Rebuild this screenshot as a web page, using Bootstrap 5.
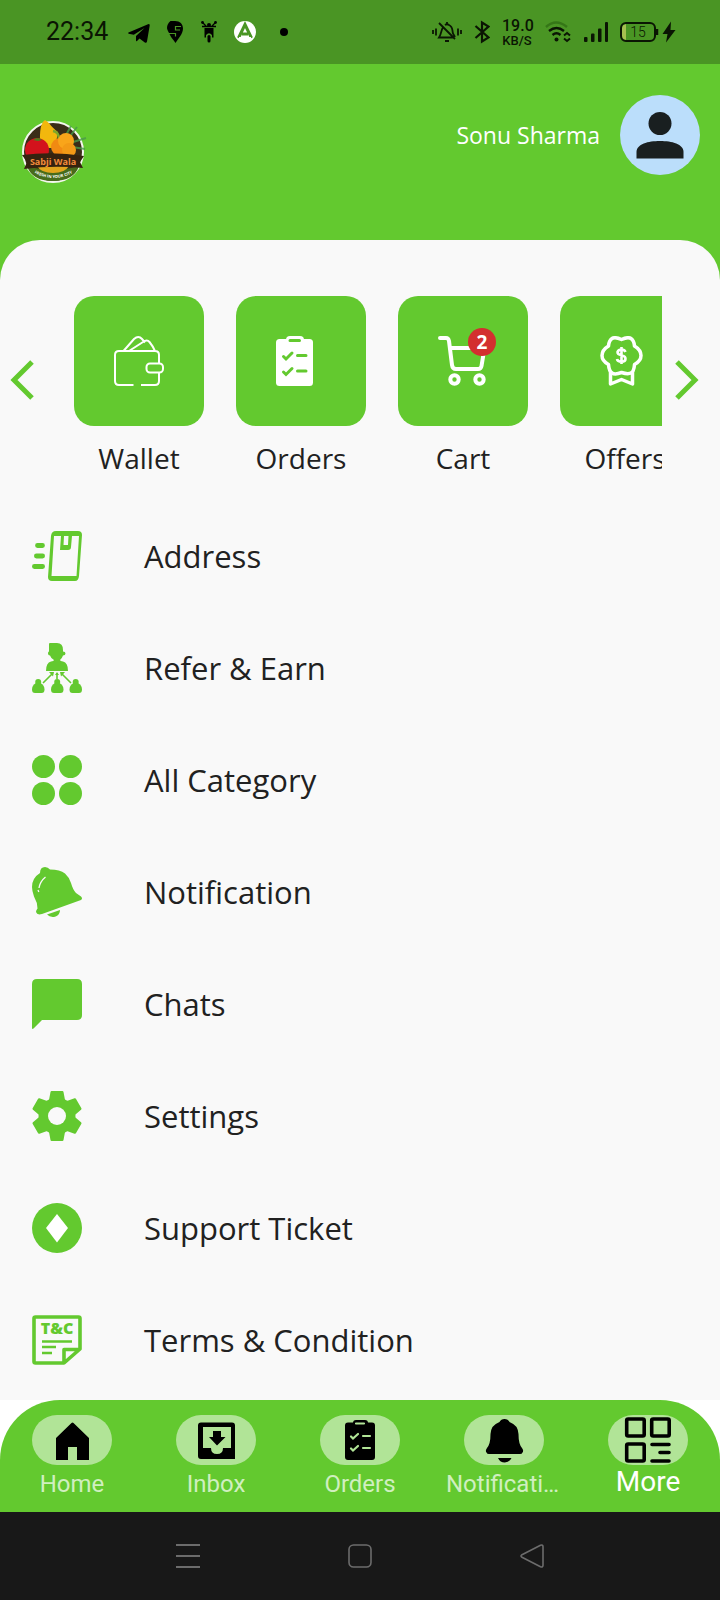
<!DOCTYPE html>
<html lang="en">
<head>
<meta charset="utf-8">
<meta name="viewport" content="width=device-width, initial-scale=1">
<title>Sabji Wala – More</title>
<link href="https://cdn.jsdelivr.net/npm/bootstrap@5.3.0/dist/css/bootstrap.min.css" rel="stylesheet">
<style>
  :root { --leaf: #63c92f; --leaf-dark: #4a9524; --paper: #f9f9f9; --ink: #212121; }
  body { font-family: "Open Sans", "Noto Sans", sans-serif; background: var(--paper); color: var(--ink); }
  svg { display: block; flex-shrink: 0; }
  a { color: inherit; text-decoration: none; }

  .status-bar { height: 64px; padding: 0 44px 0 46px; background: var(--leaf-dark); color: #0a1503; font-family: Roboto, sans-serif; }
  .status-set { gap: 16px; }
  .status-set.tight { gap: 12px; }
  .clock { min-width: 64px; font-size: 25px; line-height: 32px; }
  .net-speed { width: 30px; font-size: 13px; line-height: 13px; font-weight: 500; text-align: center; }
  .net-speed strong { display: block; font-size: 16px; line-height: 16px; font-weight: 500; }

  .app-header { min-height: 176px; padding: 31px 20px 0; background: var(--leaf); color: #fff; }
  .user-name { font-size: 23px; line-height: 32px; }
  .avatar { width: 80px; height: 80px; background: #bbdefb; }

  .sheet-wrap { background: var(--leaf); }
  .sheet { background: var(--paper); border-radius: 40px 40px 0 0; padding-top: 40px; padding-bottom: 4px; }
  .arrow-btn { width: 58px; padding: 0 0 0 10px; color: var(--leaf); border: 0; background: none; }
  .arrow-btn svg { overflow: visible; }
  .tile-strip { gap: 32px; padding: 16px 16px 4px; overflow: hidden; }
  .tile { width: 130px; }
  .tile-face { width: 130px; height: 130px; border-radius: 20px; background: var(--leaf); color: #fff; }
  .tile-label { font-size: 28px; line-height: 36px; margin-top: 14px; }
  .count { top: -8px; right: -8px; width: 28px; height: 28px; background: #d32f2f; font-size: 19px; line-height: 28px; font-weight: 700; }

  .menu-list { padding-top: 20px; }
  .menu-row { height: 112px; padding: 0 32px; gap: 62px; font-size: 31px; line-height: 40px; }
  .menu-row svg { color: var(--leaf); }

  .tab-wrap { background: #fff; }
  .tab-bar { background: var(--leaf); border-radius: 60px 60px 0 0; padding: 15px 0 9px; font-family: Roboto, sans-serif; }
  .tab-item { flex: 1 1 0; min-width: 0; color: #d0efc0; font-size: 24px; line-height: 38px; }
  .tab-item.active { color: #fff; font-size: 28px; line-height: 34px; }
  .tab-pill { background: #b1e497; border-radius: 25px; color: #000; }
  .tab-text { max-width: 116px; }
  .sys-bar { height: 88px; background: #181818; color: #6c6c6c; gap: 148px; }
  .sys-bar button { color: inherit; background: none; border: 0; padding: 0; }
</style>
</head>
<body>
<div class="min-vh-100 d-flex flex-column">

  <div class="status-bar d-flex align-items-center justify-content-between">
    <div class="status-set d-flex align-items-center">
      <span class="clock">22:34</span>
      <svg width="24" height="24" viewBox="0 0 24 24" fill="#000"><path d="M2.500 12.600 22 4.300q2-.8 1.700 1.300L21 21.500q-.5 2-2.200.9L13.500 18.500 11 21q-1 .8-1-.7v-4.400L18.500 8 7.800 14.700 2.700 13.700q-1.200-.5-.2-1.100z"/></svg>
      <svg width="18" height="24" viewBox="0 0 18 24"><path fill="#000" d="M9 1c5 0 8 3 8 7.500C17 14 12 19 9.500 23 8 20.500 5 17.500 4 15L1.500 10Q1 8.500 1 8 1 4 4.500 1 9 1z"/><path d="M15 6.500H9.500V10H14M3 13.500h6.500v3" fill="none" stroke="#4a9524" stroke-width="1.200"/></svg>
      <svg width="18" height="24" viewBox="0 0 18 24" fill="#000"><circle cx="2.500" cy="2.500" r="1.400"/><circle cx="15.500" cy="2.500" r="1.400"/><path d="M3 3 6 6M15 3l-3 3M2 6.500h14" stroke="#000" stroke-width="1.300"/><circle cx="9" cy="5" r="2"/><path d="M4.500 8h9v9.500H12V15q-3-3.500-6 0v2.500H4.500z"/><rect x="7.500" y="15" width="3" height="7.500" rx="1.500"/></svg>
      <svg width="22" height="24" viewBox="0 0 22 24"><circle cx="11" cy="12" r="11" fill="#fff"/><path d="M4.500 18 11 4.500 17.500 18M8 14h6" fill="none" stroke="#4a9524" stroke-width="3"/><path d="M5 18.500h12" stroke="#fff" stroke-width="3"/></svg>
      <svg width="24" height="24" viewBox="0 0 24 24"><circle cx="12" cy="12" r="4" fill="#000"/></svg>
    </div>
    <div class="status-set tight d-flex align-items-center">
      <svg width="30" height="24" viewBox="0 0 30 24" fill="none" stroke="currentColor" stroke-width="1.800"><path d="M1 10v4M4 8.500v7M26 8.500v7M29 10v4M7 3l16 16M11 7.500C9 10 9.500 14 7 17.500h14M13 5q2-1.500 4 0c4 1.500 3 5 4 8.500l2 3.500M13 21h4M15 2v2"/></svg>
      <svg width="16" height="24" viewBox="0 0 16 24" fill="none" stroke="currentColor" stroke-width="2.200"><path d="m1.500 6 13 11.500L8 21.500v-19l6.500 4L1.500 18"/></svg>
      <div class="net-speed"><strong>19.0</strong>KB/S</div>
      <svg width="28" height="24" viewBox="0 0 28 24" fill="none" stroke="currentColor" stroke-width="2.400"><path d="M2 7q10-9 21 0" stroke="#357617"/><path d="M5 11q7.500-6 15 0M8.500 15q4-3.500 8 0"/><circle cx="12.500" cy="19.500" r="2" fill="currentColor" stroke="none"/><path d="m20 15.500 3-2.500 3 2.500M20 18.500l3 2.500 3-2.500" stroke-width="2"/></svg>
      <svg width="24" height="24" viewBox="0 0 24 24" fill="currentColor"><rect y="17" width="3.500" height="5" rx="1"/><rect x="7" y="13.500" width="3.500" height="8.500" rx="1"/><rect x="14" y="8.500" width="3.500" height="13.500" rx="1"/><rect x="21" y="2" width="3" height="20" rx="1"/></svg>
      <svg width="56" height="24" viewBox="0 0 56 24"><path d="M6 4v16q-4-1-4-4V8q0-3 4-4z" fill="#a5c050"/><rect x="1" y="3" width="34" height="18" rx="5" fill="none" stroke="#0a1503" stroke-width="2"/><path d="M37 9v6" stroke="#0a1503" stroke-width="2.500"/><text x="18" y="17" font-size="14" font-weight="300" text-anchor="middle" fill="#0a1503">15</text><path d="M51 1.500 42.500 14h5L46 22.500 55.500 10h-5z" fill="#0a1503"/></svg>
    </div>
  </div>

  <header class="app-header d-flex align-items-start justify-content-between">
    <a href="#" class="mt-4" aria-label="Sabji Wala">
      <svg width="70" height="66" viewBox="0 0 70 66">
        <circle cx="33" cy="33" r="30" fill="#3a2d18" stroke="#f4f6ee" stroke-width="2"/>
        <g stroke="#4a9a4a" stroke-width="2" opacity=".8"><path d="M48 20 57 8M50 24l16-5M52 28l13 2M46 16l5-9"/></g>
        <path d="M20 29c0-12-1-24 5-28 5 3 7 8 13 12l-3 16z" fill="#f2b70d"/>
        <path d="M33 12q6 1 6 8" stroke="#7ca72b" stroke-width="2.500" fill="none"/>
        <circle cx="17" cy="31" r="12" fill="#d3121c"/><path d="M13 21q5-4 9 0l-4 1z" fill="#4e7c1e"/>
        <circle cx="40" cy="28" r="9" fill="#f18a12"/><circle cx="46" cy="22" r="8" fill="#f9a51a"/><circle cx="49" cy="31" r="7" fill="#f39a16"/>
        <path d="M7 47q26 8 52 0-5 15-26 15T7 47z" fill="#486b1b"/><path d="M17 47h32q-4 7-16 7t-16-7z" fill="#e3a51c"/>
        <path d="M2 36q31-4 62 1l-4 6 3 6q-30-3-59 1l3-7z" fill="#35230f"/>
        <text x="33" y="46" text-anchor="middle" font-family="Open Sans, sans-serif" font-size="9" font-weight="700" fill="#f28b3c">Sabji Wala</text>
        <path id="motto" d="M10 51q23 16 48 0" fill="none"/>
        <text font-size="4" font-family="Open Sans, sans-serif" font-weight="700" fill="#fff"><textPath href="#motto" startOffset="5">FRESH IN YOUR CITY</textPath></text>
      </svg>
    </a>
    <div class="d-flex align-items-center gap-3">
      <span class="user-name pe-1">Sonu Sharma</span>
      <a href="#" class="avatar rounded-circle d-flex align-items-center justify-content-center" aria-label="Profile">
        <svg width="48" height="48" viewBox="0 0 48 48" fill="#191f20"><circle cx="24" cy="12.500" r="11.500"/><path d="M.500 47.500V41C.500 33 12 30 24 30s23.500 3 23.500 11v6.500z"/></svg>
      </a>
    </div>
  </header>

  <div class="sheet-wrap flex-grow-1 d-flex flex-column">
    <main class="sheet flex-grow-1">
      <section class="d-flex align-items-center" aria-label="Shortcuts">
        <button type="button" class="arrow-btn flex-shrink-0" aria-label="Previous"><svg width="24" height="40" viewBox="0 0 24 40" fill="none" stroke="currentColor" stroke-width="5"><path d="M22 2 4 20l18 18"/></svg></button>
        <div class="tile-strip d-flex flex-grow-1">
          <a href="#" class="tile flex-shrink-0 text-center">
            <div class="tile-face d-flex align-items-center justify-content-center">
              <svg width="50" height="50" viewBox="0 0 50 50" fill="none" stroke="currentColor" stroke-width="2"><path d="M19.500 49H5q-4 0-4-4V19q0-4 4-4h36q4 0 4 4v8M45 37v8q0 4-4 4H27M9.500 15 20 3q4.500-4 8 0l3 3.500M15 15 29 6q4-3 6.500 0 4 5 5.500 9"/><rect x="32.500" y="27.500" width="16.500" height="9" rx="3.500"/></svg>
            </div>
            <div class="tile-label">Wallet</div>
          </a>
          <a href="#" class="tile flex-shrink-0 text-center">
            <div class="tile-face d-flex align-items-center justify-content-center">
              <svg width="50" height="50" viewBox="0 0 50 50"><rect y="3" width="37" height="47" rx="3.500" fill="#fff"/><rect x="10" width="18" height="9" rx="4" fill="#fff"/><path d="M14 4.500h9.500M21.500 19.500H30M21.500 35H30M7.500 20.500l2.500 2.500 6-6M7.500 36l2.500 2.500 6-6" fill="none" stroke="#63c92f" stroke-width="3" stroke-linecap="round"/></svg>
            </div>
            <div class="tile-label">Orders</div>
          </a>
          <a href="#" class="tile flex-shrink-0 text-center">
            <div class="tile-face d-flex align-items-center justify-content-center">
              <div class="position-relative">
                <svg width="50" height="50" viewBox="0 0 50 50" fill="none" stroke="currentColor" stroke-width="4" stroke-linecap="round" stroke-linejoin="round"><path d="M2 2h6q2.500 0 3 3l3 24q.500 4 4 4h22q3 0 3.500-3L46.500 12H13"/><circle cx="16.500" cy="43.500" r="4.200"/><circle cx="41.500" cy="43.500" r="4.200"/></svg>
                <span class="count position-absolute rounded-circle">2</span>
              </div>
            </div>
            <div class="tile-label">Cart</div>
          </a>
          <a href="#" class="tile flex-shrink-0 text-center">
            <div class="tile-face d-flex align-items-center justify-content-center">
              <svg width="50" height="50" viewBox="0 0 50 50" fill="none" stroke="currentColor" stroke-width="3.500" stroke-linejoin="round"><path d="M21.500 3.500Q28 .500 31 2.500t3.500 7.500q6.500 4 6.500 9.500T34.500 28.500q-.5 7-3.500 8.500T21.500 36.500q-6.500 2.500-9.500.5T8.500 28.500Q2 25 2 19.500T8.500 10Q9 4.500 12 2.500t9.500 1z"/><path d="M10.500 35v13l11-4.500 11 4.500V35"/><path d="M25.500 16q-1-2.500-4-2.500t-4 2.500q0 2.500 4 3.200t4 3.500q0 3-4 3t-4.500-2.700M21.500 11v17" stroke-width="2.600"/></svg>
            </div>
            <div class="tile-label">Offers</div>
          </a>
        </div>
        <button type="button" class="arrow-btn flex-shrink-0" aria-label="Next"><svg width="24" height="40" viewBox="0 0 24 40" fill="none" stroke="currentColor" stroke-width="5"><path d="m5 2 18 18L5 38"/></svg></button>
      </section>

      <nav class="menu-list" aria-label="Account">
        <a href="#" class="menu-row d-flex align-items-center">
          <svg width="50" height="50" viewBox="0 0 50 50" fill="none" stroke="currentColor"><path fill="currentColor" stroke="none" fill-rule="evenodd" d="M24 0h22q4 0 4 4l-3 41q-.5 5-4 5H20q-4 0-4-4l3-41q.5-5 5-5zM22 5l-2.500 40h25l2.500-40h-7L39 16q0 3-3 3h-8l1-14zm10 0-.5 9H36l.5-9z"/><path d="M5.500 14.500h5M4.400 25h6.200M2.400 35.500h8.200" stroke-width="4.800" stroke-linecap="round"/></svg>
          <span>Address</span>
        </a>
        <a href="#" class="menu-row d-flex align-items-center">
          <svg width="50" height="50" viewBox="0 0 50 50" fill="currentColor"><path d="M17 1q0-1 1-1h7q6 0 6 7v1.500q2.500 0 2.500 2t-2.500 2q-1 3-3 4.500 0 1 3 1.500 5 1 5 9.500H14q0-8.500 5-9.500 3-.5 3-1.500-3-1.500-4-4.500-2 0-2-2t1-2z"/><path d="M11 40 20 31M39 40 30 31M25 30.500V36" stroke="currentColor" stroke-width="1.600"/><path d="M17 29h5l-1 4.500zM33 29h-5l1 4.500zM23 32l2-3 2 3z"/><g id="kid"><circle cx="6.200" cy="39" r="3"/><path d="M4 40h4.500q4 2 4 6.500 0 3.500-3 3.500h-6.500Q0 50 0 46.500 0 42 4 40z"/></g><use href="#kid" x="19"/><use href="#kid" x="37.500"/></svg>
          <span>Refer &amp; Earn</span>
        </a>
        <a href="#" class="menu-row d-flex align-items-center">
          <svg width="50" height="50" viewBox="0 0 50 50" fill="currentColor"><circle cx="11.500" cy="11.500" r="11.500"/><circle cx="38.500" cy="11.500" r="11.500"/><circle cx="11.500" cy="38.500" r="11.500"/><circle cx="38.500" cy="38.500" r="11.500"/></svg>
          <span>All Category</span>
        </a>
        <a href="#" class="menu-row d-flex align-items-center">
          <svg width="50" height="50" viewBox="0 0 50 50" fill="currentColor"><path d="M8 6q0-6 5-6 3 0 5 2.500 10 0 15 4 4 3.500 6 9.500 2 7 5 10l5 3.500q2 2 0 3.500L10 47q-5 1.500-6-2 0-2 1.500-3.500 0-6-3.500-12Q0 24 0 20 0 11 8 6z"/><path d="M15 47.500 28 43q0 5-5 6.700-5 1-8-2.200z"/><path d="M7 21q1-6.500 6.500-11M6 23l.8 2" fill="none" stroke="#f9f9f9" stroke-width="1.300"/></svg>
          <span>Notification</span>
        </a>
        <a href="#" class="menu-row d-flex align-items-center">
          <svg width="50" height="50" viewBox="0 0 50 50" fill="currentColor"><path d="M5 0h40q5 0 5 5v31q0 5-5 5H10l-8.500 8.500Q0 50.500 0 49V5q0-5 5-5z"/></svg>
          <span>Chats</span>
        </a>
        <a href="#" class="menu-row d-flex align-items-center">
          <svg width="50" height="50" viewBox="0 0 50 50" fill="currentColor"><mask id="hub"><rect width="50" height="50" fill="#fff"/><circle cx="25" cy="25" r="9" fill="#000"/></mask><g mask="url(#hub)"><circle cx="25" cy="25" r="18.500"/><g id="teeth"><path d="M19.500 0h11q.8 0 1 1l1.500 8v32l-1.500 8q-.2 1-1 1h-11q-.8 0-1-1L17 41V9l1.500-8q.2-1 1-1z"/></g><use href="#teeth" transform="rotate(60 25 25)"/><use href="#teeth" transform="rotate(120 25 25)"/></g></svg>
          <span>Settings</span>
        </a>
        <a href="#" class="menu-row d-flex align-items-center">
          <svg width="50" height="50" viewBox="0 0 50 50"><circle cx="25" cy="25" r="25" fill="currentColor"/><path d="m25 11 11 14-11 14.500L14 25z" fill="#fff"/></svg>
          <span>Support Ticket</span>
        </a>
        <a href="#" class="menu-row d-flex align-items-center">
          <svg width="50" height="50" viewBox="0 0 50 50" fill="none" stroke="currentColor" stroke-width="3.600" stroke-linejoin="round"><path d="M3.500 2h43q1.500 0 1.500 1.500V34L32 48H3.500Q2 48 2 46.500v-43Q2 2 3.500 2zM32 47V34.500h15"/><path d="M10 26.500h30M10 32h14M10 38h10" stroke-width="2.400"/><text x="25" y="19" text-anchor="middle" font-size="16" font-weight="800" fill="currentColor" stroke="none">T&amp;C</text></svg>
          <span>Terms &amp; Condition</span>
        </a>
      </nav>
    </main>
  </div>

  <div class="tab-wrap">
    <nav class="tab-bar d-flex" aria-label="Main">
      <a href="#" class="tab-item d-flex flex-column align-items-center">
        <svg class="tab-pill" width="80" height="50" viewBox="0 0 80 50" fill="currentColor"><path d="M24 45V23L39.500 8q1-1 2 0L57 23v22H45V32h-9v13z"/></svg>
        <span class="tab-text text-truncate">Home</span>
      </a>
      <a href="#" class="tab-item d-flex flex-column align-items-center">
        <svg class="tab-pill" width="80" height="50" viewBox="0 0 80 50" fill="currentColor"><path fill-rule="evenodd" d="M25 7.500h31q3 0 3 3V44H25q-3 0-3-3V10.500q0-3 3-3zM27 12v21h8q0 6 6 6t6-6h8V12z"/><path d="M37 16h8v6h4.500L41 30.500 33 22h4z"/></svg>
        <span class="tab-text text-truncate">Inbox</span>
      </a>
      <a href="#" class="tab-item d-flex flex-column align-items-center">
        <svg class="tab-pill" width="80" height="50" viewBox="0 0 80 50" fill="currentColor"><rect x="25" y="7.500" width="30" height="37.500" rx="3"/><rect x="33" y="5" width="15" height="7" rx="3"/><path d="M36 8.500h8M43 21h7M43 33h7M31 21.500l2 2 5-4.500M31 33.500l2 2 5-4.500" fill="none" stroke="#b1e497" stroke-width="2.200" stroke-linecap="round"/></svg>
        <span class="tab-text text-truncate">Orders</span>
      </a>
      <a href="#" class="tab-item d-flex flex-column align-items-center">
        <svg class="tab-pill" width="80" height="50" viewBox="0 0 80 50" fill="currentColor"><path d="M35.500 7q1.500-3 5-3t5 3Q54 10 54.500 19q0 10 3.500 14 2 2.500.5 4.500-.5 1.500-2.500 1.500H25q-2 0-2.500-1.500-1.500-2 .5-4.500 3.500-4 3.500-14Q27 10 35.500 7zM34 43h13.500q-2 4.500-6.700 4.500T34 43z"/></svg>
        <span class="tab-text text-truncate">Notification</span>
      </a>
      <a href="#" class="tab-item active d-flex flex-column align-items-center" aria-current="page">
        <svg class="tab-pill" width="80" height="50" viewBox="0 0 80 50" fill="none" stroke="currentColor" stroke-width="3.600"><rect x="18.700" y="4" width="17.500" height="17" rx="1.500"/><rect x="43.700" y="4" width="17.500" height="17" rx="1.500"/><rect x="18.700" y="29" width="17.500" height="17" rx="1.500"/><path d="M44 29.500h17M52 37.500h9M44 46h17" stroke-linecap="round"/></svg>
        <span class="tab-text text-truncate">More</span>
      </a>
    </nav>
  </div>

  <div class="sys-bar d-flex align-items-center justify-content-center">
    <button type="button" aria-label="Recent apps"><svg width="24" height="24" viewBox="0 0 24 24" stroke="currentColor" stroke-width="2"><path d="M0 1h24M0 12h24M0 23h24"/></svg></button>
    <button type="button" aria-label="Home screen"><svg width="24" height="24" viewBox="0 0 24 24" fill="none" stroke="currentColor" stroke-width="1.600"><rect x="1" y="1" width="22" height="22" rx="4.500"/></svg></button>
    <button type="button" aria-label="Back"><svg width="24" height="24" viewBox="0 0 24 24" fill="none" stroke="currentColor" stroke-width="1.600" stroke-linejoin="round"><path d="M2 10.700 20.500 1.200Q23 .500 23 2.800v18.400q0 2.300-2.500 1.600L2 13.300q-2-1.300 0-2.600z"/></svg></button>
  </div>
</div>
<script src="https://cdn.jsdelivr.net/npm/bootstrap@5.3.0/dist/js/bootstrap.bundle.min.js"></script>
</body>
</html>
